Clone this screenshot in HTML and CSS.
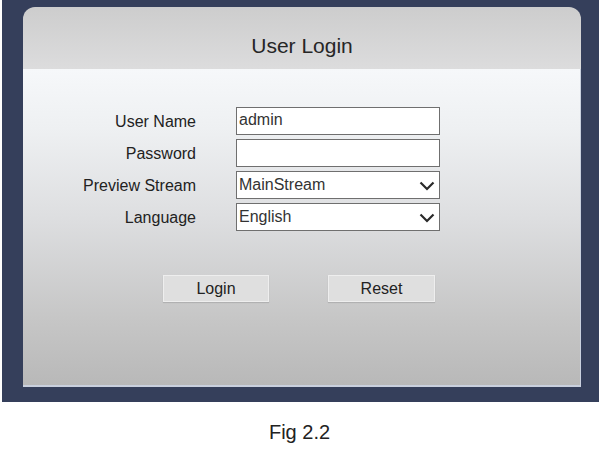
FILE: index.html
```html
<!DOCTYPE html>
<html>
<head>
<meta charset="utf-8">
<link rel="stylesheet" href="styles.css">
</head>
<body>
<div class="frame">
  <div class="panel">
    <div class="header">User Login</div>
    <div class="content">
      <div class="form">
        <div class="label">User Name</div>
        <div class="field">admin</div>
        <div class="label">Password</div>
        <div class="field"></div>
        <div class="label">Preview Stream</div>
        <div class="field select"><span>MainStream</span><svg class="chev" width="16" height="10" viewBox="0 0 16 10"><path d="M1.5 1.5 L8 8 L14.5 1.5" fill="none" stroke="#2a2a2a" stroke-width="2.2"/></svg></div>
        <div class="label">Language</div>
        <div class="field select"><span>English</span><svg class="chev" width="16" height="10" viewBox="0 0 16 10"><path d="M1.5 1.5 L8 8 L14.5 1.5" fill="none" stroke="#2a2a2a" stroke-width="2.2"/></svg></div>
      </div>
      <div class="buttons">
        <div class="btn login">Login</div>
        <div class="btn reset">Reset</div>
      </div>
    </div>
  </div>
</div>
<div class="caption">Fig 2.2</div>
</body>
</html>
```
FILE: styles.css
```css
html, body {
  margin: 0;
  padding: 0;
  background: #ffffff;
  font-family: "Liberation Sans", Arial, sans-serif;
  color: #222;
}
.frame {
  margin: 0 2px;
  width: 574px;
  height: 380px;
  padding: 7px 16px 15px 21px;
  background: #353f5b;
}
.panel {
  width: 558px;
  height: 380px;
  border-radius: 12px 12px 0 0;
  overflow: hidden;
  display: flex;
  flex-direction: column;
}
.header {
  height: 62px;
  flex: none;
  background: linear-gradient(#cdcdcd, #dcdcdd);
  text-align: center;
  font-size: 21px;
  line-height: 24px;
  padding-top: 27px;
  box-sizing: border-box;
  color: #262626;
}
.content {
  flex: 1;
  padding-top: 38px;
  background: linear-gradient(#f6f8fa 0px, #eef0f2 60px, #dddee0 150px, #c6c6c6 250px, #b8b8b8 318px);
  box-shadow: inset -1px -2px 0 #c9d0de;
}
.form {
  display: grid;
  grid-template-columns: 173px 204px;
  grid-auto-rows: 28px;
  column-gap: 40px;
  row-gap: 4px;
}
.label {
  text-align: right;
  font-size: 16px;
  line-height: 30px;
  color: #222;
}
.field {
  box-sizing: border-box;
  border: 1px solid #6f6f6f;
  background: #ffffff;
  font-size: 16px;
  line-height: 24px;
  padding-left: 2px;
  color: #333;
}
.select {
  display: flex;
  align-items: center;
  justify-content: space-between;
  padding-right: 4px;
  line-height: 25px;
}
.select span {
  align-self: flex-start;
}
.chev {
  display: block;
  margin-top: 1px;
}
.buttons {
  display: flex;
  gap: 59px;
  padding-left: 140px;
  margin-top: 44px;
}
.btn {
  box-sizing: border-box;
  height: 27px;
  border: 1px solid #eeeeee;
  background: #dfdfdf;
  box-shadow: 0 1px 1px rgba(0,0,0,0.12);
  font-size: 16px;
  line-height: 25px;
  text-align: center;
  color: #222;
}
.login { width: 106px; }
.reset { width: 107px; }
.caption {
  text-align: center;
  font-size: 20px;
  margin-top: 19px;
  color: #222;
}
```
